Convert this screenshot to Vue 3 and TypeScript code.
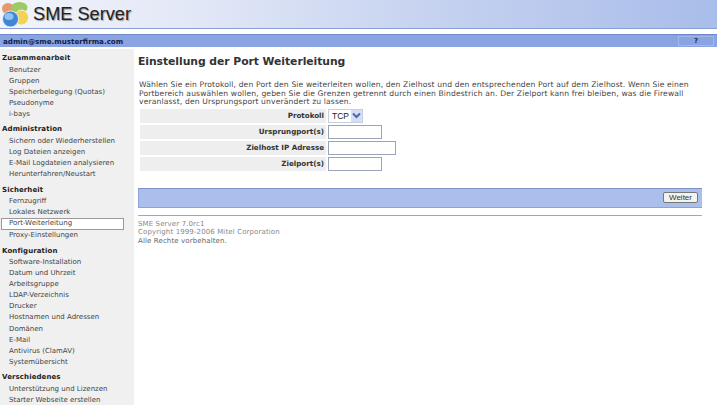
<script setup lang="ts">
const groups: { title: string; items: string[] }[] = [
  { title: 'Zusammenarbeit', items: ['Benutzer', 'Gruppen', 'Speicherbelegung (Quotas)', 'Pseudonyme', 'i-bays'] },
  { title: 'Administration', items: ['Sichern oder Wiederherstellen', 'Log Dateien anzeigen', 'E-Mail Logdateien analysieren', 'Herunterfahren/Neustart'] },
  { title: 'Sicherheit', items: ['Fernzugriff', 'Lokales Netzwerk', 'Port-Weiterleitung', 'Proxy-Einstellungen'] },
  { title: 'Konfiguration', items: ['Software-Installation', 'Datum und Uhrzeit', 'Arbeitsgruppe', 'LDAP-Verzeichnis', 'Drucker', 'Hostnamen und Adressen', 'Domänen', 'E-Mail', 'Antivirus (ClamAV)', 'Systemübersicht'] },
  { title: 'Verschiedenes', items: ['Unterstützung und Lizenzen', 'Starter Webseite erstellen'] },
]
const active = 'Port-Weiterleitung'
</script>

<template>
  <div class="page">
    <header class="banner">
      <svg class="logo" width="30" height="29" viewBox="0 0 30 29">
        <ellipse cx="8" cy="8.5" rx="6" ry="5.5" fill="#e39a6c" />
        <ellipse cx="19.5" cy="7.5" rx="8" ry="5.5" fill="#9ccb62" />
        <ellipse cx="21.5" cy="17.5" rx="7" ry="7.5" fill="#f2d354" stroke="#f4f6fb" stroke-width="0.8" />
        <circle cx="10.5" cy="19" r="8" fill="#3f86d6" stroke="#f4f6fb" stroke-width="0.8" />
        <ellipse cx="9" cy="16.5" rx="4.5" ry="3.5" fill="#8fc2f0" />
      </svg>
      <span class="brand">SME Server</span>
    </header>
    <div class="userbar">
      <span class="user">admin@sme.musterfirma.com</span>
      <span class="help">?</span>
    </div>
    <div class="body">
      <nav class="side">
        <section v-for="g in groups" :key="g.title" class="group">
          <div class="gtitle">{{ g.title }}</div>
          <div v-for="i in g.items" :key="i" class="item" :class="{ on: i === active }">{{ i }}</div>
        </section>
      </nav>
      <main class="content">
        <h1>Einstellung der Port Weiterleitung</h1>
        <p class="intro">Wählen Sie ein Protokoll, den Port den Sie weiterleiten wollen, den Zielhost und den entsprechenden Port auf dem Zielhost. Wenn Sie einen Portbereich auswählen wollen, geben Sie die Grenzen getrennt durch einen Bindestrich an. Der Zielport kann frei bleiben, was die Firewall veranlasst, den Ursprungsport unverändert zu lassen.</p>
        <div class="form">
          <div class="row">
            <label>Protokoll</label>
            <div class="fake-select"><span>TCP</span><span class="arrow"><svg width="9" height="7" viewBox="0 0 9 7"><path d="M1 1.5 4.5 5 8 1.5" fill="none" stroke="#4a66b8" stroke-width="2" /></svg></span></div>
          </div>
          <div class="row"><label>Ursprungport(s)</label><input class="w54" type="text" /></div>
          <div class="row"><label>Zielhost IP Adresse</label><input class="w68" type="text" /></div>
          <div class="row"><label>Zielport(s)</label><input class="w54" type="text" /></div>
        </div>
        <div class="actions"><button type="button">Weiter</button></div>
        <footer class="foot">
          <div>SME Server 7.0rc1</div>
          <div>Copyright 1999-2006 Mitel Corporation</div>
          <div class="dark">Alle Rechte vorbehalten.</div>
        </footer>
      </main>
    </div>
  </div>
</template>

<style scoped>
.page {
  width: 717px;
  height: 405px;
  overflow: hidden;
  background: #fff;
  font-family: "DejaVu Sans", Verdana, sans-serif;
  font-size: 7.6px;
  color: #333;
}
.banner {
  height: 29px;
  display: flex;
  align-items: center;
  box-sizing: border-box;
  background: linear-gradient(90deg, #f2f4fb 0%, #e4e9f7 25%, #c6d2f0 60%, #a9bdea 100%);
  border-bottom: 1px solid #8a9fd6;
}
.logo { flex: none; }
.brand {
  margin-left: 3px;
  font-family: "Liberation Sans", Arial, sans-serif;
  font-size: 18.2px;
  color: #222;
  text-shadow: 1px 1px 1px #9a9a9a;
}
.userbar {
  margin-top: 5px;
  height: 13px;
  box-sizing: border-box;
  border-top: 1px solid #6f88cc;
  background: #8aa4e2;
  display: flex;
  align-items: center;
  justify-content: space-between;
  padding: 0 3px 0 3px;
}
.user { font-weight: 700; font-size: 7.15px; color: #10204a; }
.help {
  width: 34px;
  height: 8px;
  line-height: 8px;
  text-align: center;
  border: 1px solid #a3b7e8;
  font-weight: 700;
  font-size: 7px;
  color: #1a2f6a;
}
.body { display: flex; align-items: flex-start; margin-top: 2px; }
.side {
  flex: none;
  width: 134px;
  height: 356px;
  background: #f0f0f0;
  padding-top: 4px;
  box-sizing: border-box;
}
.group { margin-bottom: 4.7px; }
.gtitle {
  height: 11.5px;
  line-height: 11px;
  padding-left: 2px;
  font-weight: 700;
  font-size: 7px;
  color: #222;
  letter-spacing: 0.1px;
}
.item {
  box-sizing: border-box;
  width: 123px;
  margin-left: 1px;
  height: 11.05px;
  line-height: 11px;
  padding-left: 8px;
  font-size: 7px;
  color: #444;
}
.item.on {
  background: #fff;
  border: 1px solid #999;
  height: 11.6px;
  line-height: 9.6px;
  padding-left: 7px;
}
.content {
  flex: 1;
  min-width: 0;
  padding: 5px 15px 0 4px;
}
h1 {
  margin: 0;
  font-size: 10.8px;
  line-height: 16px;
  font-weight: 700;
  letter-spacing: -0.05px;
  color: #333;
}
.intro {
  margin: 11px 0 0 1px;
  font-size: 7.6px;
  line-height: 8.7px;
  letter-spacing: 0.14px;
  color: #444;
}
.form { margin-top: 1.4px; margin-left: 2px; display: flex; flex-direction: column; gap: 2px; }
.row {
  display: flex;
  align-items: center;
  height: 14px;
  gap: 2px;
}
.row label {
  flex: none;
  width: 186px;
  height: 14px;
  line-height: 14px;
  text-align: right;
  background: #eeeeee;
  font-weight: 700;
  font-size: 7.15px;
  color: #333;
  padding-right: 2px;
  box-sizing: border-box;
}
input {
  box-sizing: border-box;
  height: 14px;
  padding: 0;
  border: 1px solid #9aa3b8;
  background: #fff;
  outline: none;
}
.w54 { width: 54px; }
.w68 { width: 68px; }
.fake-select {
  box-sizing: border-box;
  width: 35px;
  height: 14px;
  border: 1px solid #c6cfe2;
  display: flex;
  align-items: center;
  justify-content: space-between;
  padding-left: 3px;
  font-family: "Liberation Sans", Arial, sans-serif;
  font-size: 8.5px;
  color: #222;
}
.arrow {
  width: 11px;
  height: 12px;
  background: #d4dff6;
  display: flex;
  align-items: center;
  justify-content: center;
}
.actions {
  margin: 17px 0 0 0;
  height: 20px;
  box-sizing: border-box;
  background: #aabfeb;
  border-top: 1px solid #7d91c8;
  border-left: 1px solid #8ea2d4;
  border-bottom: 1px solid #8ea2d4;
  display: flex;
  align-items: center;
  justify-content: flex-end;
  padding-right: 4px;
}
button {
  box-sizing: border-box;
  width: 35px;
  height: 11px;
  padding: 0;
  border: 1px solid #777;
  border-radius: 2px;
  background: #f3f3f0;
  font-family: "Liberation Sans", Arial, sans-serif;
  font-size: 8px;
  line-height: 9px;
  color: #333;
}
.foot {
  margin-top: 7px;
  border-top: 1px solid #97a5cf;
  padding-top: 4px;
  font-size: 7px;
  line-height: 8.6px;
  letter-spacing: 0.12px;
  color: #888;
}
.foot .dark { color: #666; }
</style>
